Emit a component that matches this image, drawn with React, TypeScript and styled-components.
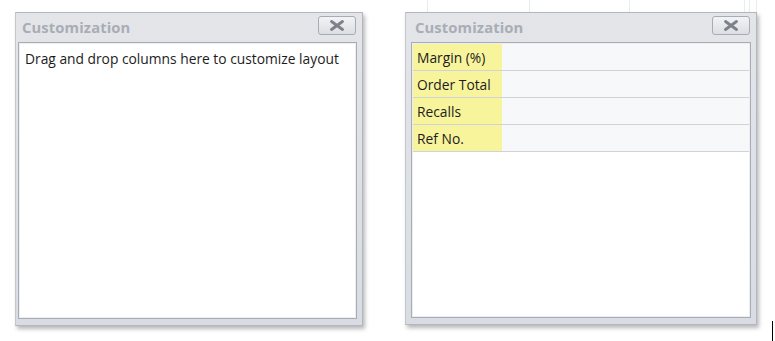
import { FC } from 'react';

import styled, { createGlobalStyle } from 'styled-components';

const GlobalStyle = createGlobalStyle`
  html, body {
    margin: 0;
    padding: 0;
    background: #ffffff;
  }
  body {
    font-family: "Open Sans", "Liberation Sans", sans-serif;
  }
`;

const Page = styled.div`
  display: flex;
  flex-flow: row nowrap;
  align-items: flex-start;

  width: 775px;
  height: 341px;

  padding: 12px 0 0 15px;
  box-sizing: border-box;

  overflow: hidden;
`;

const Column = styled.div<{ $gap: number }>`
  display: flex;
  flex-flow: column nowrap;

  margin-left: ${({ $gap }) => $gap}px;
  margin-top: ${({ $gap }) => ($gap ? -12 : 0)}px;
`;

const GhostHeader = styled.div`
  display: grid;
  grid-template-columns: 23px 102px 100px 115px 5px 7px;

  height: 12px;

  & > span {
    border-right: 1px solid #ebecee;
  }
`;

const Window = styled.section<{ $width: number; $height: number; $inset: number }>`
  display: flex;
  flex-flow: column nowrap;

  width: ${({ $width }) => $width}px;
  height: ${({ $height }) => $height}px;
  box-sizing: border-box;

  padding: 0 5px 6px ${({ $inset }) => $inset}px;

  background: linear-gradient(#e3e5e9, #d9dce2);
  border: 1px solid #b3b6be;
  border-left-color: #c4c7ce;
  box-shadow: 2px 3px 4px rgba(0, 0, 0, 0.28);
`;

const TitleBar = styled.header`
  display: flex;
  align-items: center;
  justify-content: space-between;

  height: 29px;
  padding: 0 0 0 4px;
`;

const Title = styled.h2`
  margin: 0 0 2px;

  color: #a9adb5;
  font-size: 14.8px;
  font-weight: 700;
  letter-spacing: 0.1px;
`;

const CloseButton = styled.button`
  display: flex;
  align-items: center;
  justify-content: center;

  width: 38px;
  height: 19px;
  margin: 0 1px 4px 0;
  padding: 0;

  background: linear-gradient(#f2f3f5, #dcdee3);
  border: 1px solid #a7abb3;
  border-radius: 3px;
`;

const Content = styled.div`
  display: flex;
  flex-flow: column nowrap;
  flex: 1;

  background: #ffffff;
  border: 1px solid #a8acb5;
  outline: 1px solid #eceef1;
  outline-offset: -2px;
`;

const Hint = styled.p`
  margin: 0;
  padding: 6px 6px;

  color: #1c1c1c;
  font-size: 13.8px;
`;

const FieldList = styled.div`
  display: flex;
  flex-flow: column nowrap;

  padding-top: 1px;
`;

const FieldRow = styled.div`
  display: flex;
  align-items: stretch;

  height: 26px;

  background: #f7f8fa;
  border-bottom: 1px solid #cfd2d8;
`;

const FieldName = styled.span`
  display: flex;
  align-items: center;

  width: 85px;
  padding-left: 5px;

  background: #f8f49c;
  color: #1c1c1c;
  font-size: 13.8px;
`;

const Caret = styled.div`
  align-self: flex-end;

  width: 1px;
  height: 20px;
  margin: 0 0 0 15px;

  background: #000000;
`;

const CloseIcon: FC = () => (
  <svg width="16" height="11" viewBox="0 0 16 11">
    <path d="M2.5 1.5 L13.5 9.5 M13.5 1.5 L2.5 9.5" stroke="#7d8189" strokeWidth="2.8" strokeLinecap="round" />
  </svg>
);

const fields = ['Margin (%)', 'Order Total', 'Recalls', 'Ref No.'];

const App: FC = () => {
  return (
    <>
      <GlobalStyle />
      <Page>
        <Column $gap={0}>
          <Window $width={348} $height={314} $inset={2}>
            <TitleBar>
              <Title>Customization</Title>
              <CloseButton><CloseIcon /></CloseButton>
            </TitleBar>
            <Content>
              <Hint>Drag and drop columns here to customize layout</Hint>
            </Content>
          </Window>
        </Column>
        <Column $gap={42}>
          <GhostHeader>
            <span />
            <span />
            <span />
            <span />
            <span />
            <span />
          </GhostHeader>
          <Window $width={352} $height={313} $inset={5}>
            <TitleBar>
              <Title>Customization</Title>
              <CloseButton><CloseIcon /></CloseButton>
            </TitleBar>
            <Content>
              <FieldList>
                {fields.map((name) => (
                  <FieldRow key={name}>
                    <FieldName>{name}</FieldName>
                  </FieldRow>
                ))}
              </FieldList>
            </Content>
          </Window>
        </Column>
        <Caret />
      </Page>
    </>
  );
};

export default App;
